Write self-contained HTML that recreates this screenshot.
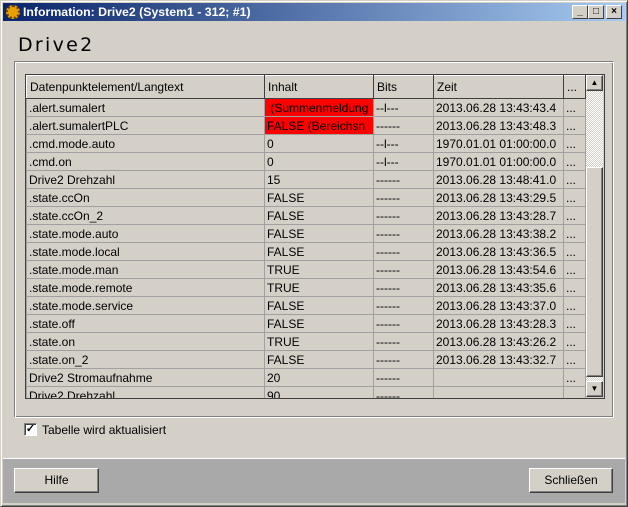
<!DOCTYPE html>
<html><head><meta charset="utf-8"><style>
*{margin:0;padding:0;box-sizing:border-box}
body{width:628px;height:507px;background:#d4d0c8;font-family:"Liberation Sans",sans-serif;position:relative;overflow:hidden}
.win{position:absolute;left:0;top:0;width:628px;height:507px;border:1px solid;border-color:#d4d0c8 #404040 #404040 #d4d0c8;box-shadow:inset 1px 1px #fff,inset -1px -1px #808080}
.title{position:absolute;left:3px;top:3px;width:622px;height:18px;background:linear-gradient(to right,#0a246a,#a6caf0);color:#fff;font-weight:bold;font-size:12.3px;line-height:18px;padding-left:20px}
.ic{position:absolute;left:3px;top:2px;width:14px;height:14px;border-radius:50%;background:#e8a000;border:2px dotted #6b4000}
.tb{position:absolute;top:5px;width:16px;height:14px;background:#d4d0c8;border:1px solid;border-color:#fff #404040 #404040 #fff;font-size:10px;color:#000;text-align:center;line-height:12px;font-weight:bold}
.h1{position:absolute;left:18px;top:34px;font-size:19px;font-family:"DejaVu Sans",sans-serif;letter-spacing:2.3px;color:#000}
.grp{position:absolute;left:14px;top:61px;width:600px;height:357px;border:1px solid;border-color:#808080 #fff #fff #808080;box-shadow:inset 1px 1px #fff,inset -1px -1px #808080}
table{position:absolute;left:25px;top:74px;border-collapse:collapse;font-size:12px;table-layout:fixed}
td{height:18px;border:1px solid #a0a0a0;padding-left:2px;white-space:nowrap;overflow:hidden;line-height:16px}
th{height:23px;font-weight:normal;text-align:left;padding-left:3px;border:1px solid;border-color:#fff #404040 #404040 #fff;background:#d4d0c8;font-size:12px}
.r{background:#f00}
.tbl{position:absolute;left:25px;top:74px;width:580px;height:325px;overflow:hidden;border:1px solid #404040}
.sb{position:absolute;left:586px;top:75px;width:17px;height:322px;background:repeating-conic-gradient(#fff 0 25%,#d4d0c8 0 50%) 0 0/2px 2px}
.btn3{position:absolute;background:#d4d0c8;border:1px solid;border-color:#fff #404040 #404040 #fff;box-shadow:inset -1px -1px #808080}
.foot{position:absolute;left:3px;top:458px;width:622px;height:45px;background:#a9a9a9;border-top:1px solid #fff}
.btn{position:absolute;top:468px;height:25px;background:#d4d0c8;border:1px solid;border-color:#fff #404040 #404040 #fff;box-shadow:inset -1px -1px #808080;font-size:12px;text-align:center;line-height:23px}
</style></head><body>
<div class="win"></div>
<div class="title"><div class="ic"></div>Information: Drive2 (System1 - 312; #1)</div>
<div class="tb" style="left:572px">_</div><div class="tb" style="left:588px">□</div><div class="tb" style="left:606px">×</div>
<div class="h1">Drive2</div>
<div class="grp"></div>
<div class="tbl">
<table style="left:0;top:0">
<colgroup><col style="width:238px"><col style="width:109px"><col style="width:60px"><col style="width:130px"><col style="width:22px"></colgroup>
<tr><th>Datenpunktelement/Langtext</th><th>Inhalt</th><th>Bits</th><th>Zeit</th><th>...</th></tr>
<tr><td>.alert.sumalert</td><td class="r">&nbsp;(Summenmeldung</td><td>--l---</td><td>2013.06.28 13:43:43.4</td><td>...</td></tr>
<tr><td>.alert.sumalertPLC</td><td class="r">FALSE (Bereichsn</td><td>------</td><td>2013.06.28 13:43:48.3</td><td>...</td></tr>
<tr><td>.cmd.mode.auto</td><td>0</td><td>--l---</td><td>1970.01.01 01:00:00.0</td><td>...</td></tr>
<tr><td>.cmd.on</td><td>0</td><td>--l---</td><td>1970.01.01 01:00:00.0</td><td>...</td></tr>
<tr><td>Drive2 Drehzahl</td><td>15</td><td>------</td><td>2013.06.28 13:48:41.0</td><td>...</td></tr>
<tr><td>.state.ccOn</td><td>FALSE</td><td>------</td><td>2013.06.28 13:43:29.5</td><td>...</td></tr>
<tr><td>.state.ccOn_2</td><td>FALSE</td><td>------</td><td>2013.06.28 13:43:28.7</td><td>...</td></tr>
<tr><td>.state.mode.auto</td><td>FALSE</td><td>------</td><td>2013.06.28 13:43:38.2</td><td>...</td></tr>
<tr><td>.state.mode.local</td><td>FALSE</td><td>------</td><td>2013.06.28 13:43:36.5</td><td>...</td></tr>
<tr><td>.state.mode.man</td><td>TRUE</td><td>------</td><td>2013.06.28 13:43:54.6</td><td>...</td></tr>
<tr><td>.state.mode.remote</td><td>TRUE</td><td>------</td><td>2013.06.28 13:43:35.6</td><td>...</td></tr>
<tr><td>.state.mode.service</td><td>FALSE</td><td>------</td><td>2013.06.28 13:43:37.0</td><td>...</td></tr>
<tr><td>.state.off</td><td>FALSE</td><td>------</td><td>2013.06.28 13:43:28.3</td><td>...</td></tr>
<tr><td>.state.on</td><td>TRUE</td><td>------</td><td>2013.06.28 13:43:26.2</td><td>...</td></tr>
<tr><td>.state.on_2</td><td>FALSE</td><td>------</td><td>2013.06.28 13:43:32.7</td><td>...</td></tr>
<tr><td>Drive2 Stromaufnahme</td><td>20</td><td>------</td><td></td><td>...</td></tr>
<tr><td>Drive2 Drehzahl</td><td>90</td><td>------</td><td></td><td></td></tr>
</table>
</div>
<div class="sb"></div>
<div class="btn3" style="left:586px;top:75px;width:17px;height:16px;font-size:8px;text-align:center;line-height:14px">▲</div>
<div class="btn3" style="left:586px;top:167px;width:17px;height:210px"></div>
<div class="btn3" style="left:586px;top:381px;width:17px;height:16px;font-size:8px;text-align:center;line-height:14px">▼</div>
<div style="position:absolute;left:24px;top:423px;width:13px;height:13px;background:#fff;border:1px solid;border-color:#808080 #fff #fff #808080;box-shadow:inset 1px 1px #404040;font-size:11px;line-height:11px;text-align:center;font-weight:bold">✓</div>
<div style="position:absolute;left:42px;top:423px;font-size:12px">Tabelle wird aktualisiert</div>
<div class="foot"></div>
<div class="btn" style="left:14px;width:85px">Hilfe</div>
<div class="btn" style="left:529px;width:84px">Schließen</div>
</body></html>
